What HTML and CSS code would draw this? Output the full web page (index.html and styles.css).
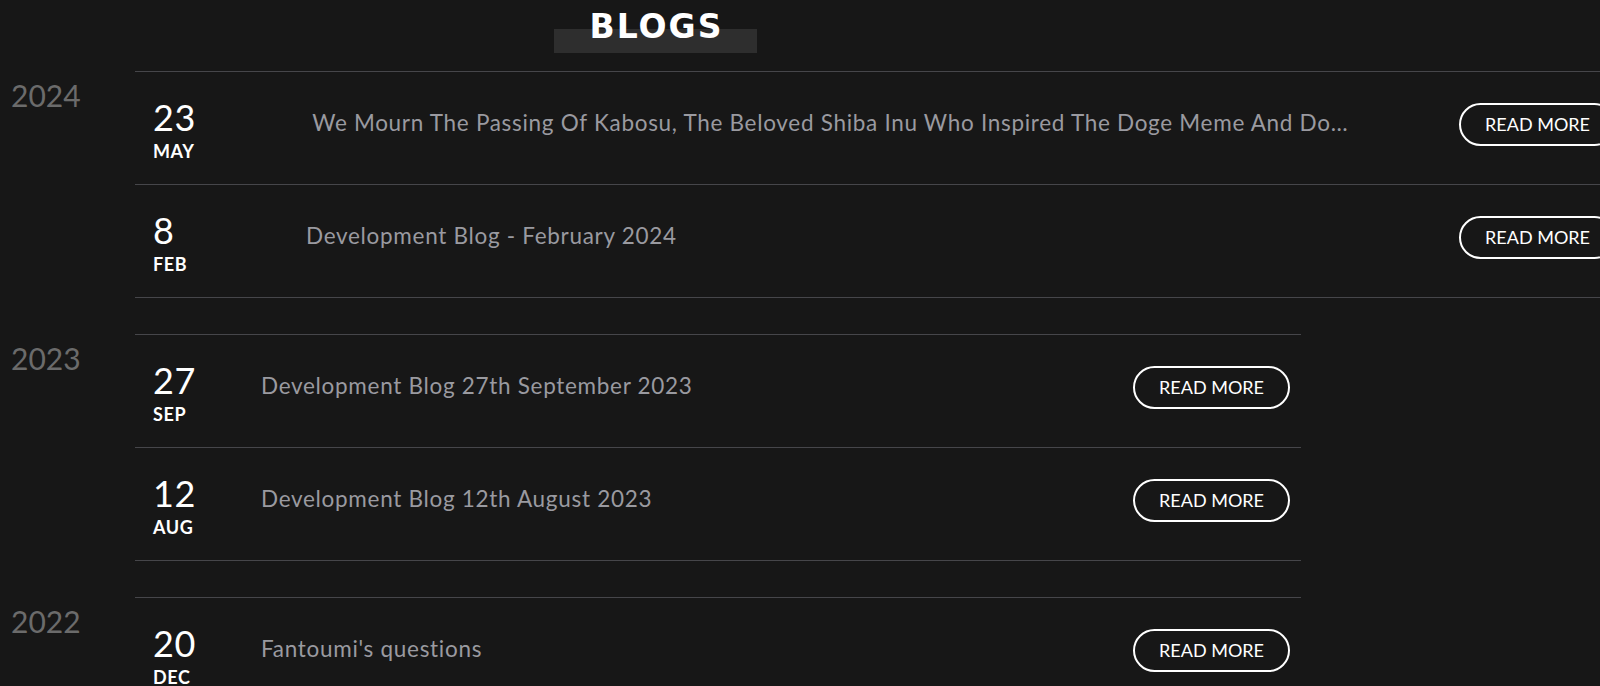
FILE: index.html
```html
<!DOCTYPE html>
<html lang="en">
<head>
<meta charset="utf-8">
<title>Blogs</title>
<link rel="stylesheet" href="styles.css">
</head>
<body>
<main class="page">
  <h1 class="page-title">BLOGS</h1>

  <section class="year-group">
    <div class="year">2024</div>
    <ul class="feed feed-wide">
      <li class="post">
        <div class="date"><span class="day">23</span><span class="month">MAY</span></div>
        <a class="post-title" href="#">&nbsp;We Mourn The Passing Of Kabosu, The Beloved Shiba Inu Who Inspired The Doge Meme And Dogecoin</a>
        <a class="read-more" href="#">READ MORE</a>
      </li>
      <li class="post">
        <div class="date"><span class="day">8</span><span class="month">FEB</span></div>
        <a class="post-title" href="#">Development Blog - February 2024</a>
        <a class="read-more" href="#">READ MORE</a>
      </li>
    </ul>
  </section>

  <section class="year-group">
    <div class="year">2023</div>
    <ul class="feed">
      <li class="post">
        <div class="date"><span class="day">27</span><span class="month">SEP</span></div>
        <a class="post-title" href="#">Development Blog 27th September 2023</a>
        <a class="read-more" href="#">READ MORE</a>
      </li>
      <li class="post">
        <div class="date"><span class="day">12</span><span class="month">AUG</span></div>
        <a class="post-title" href="#">Development Blog 12th August 2023</a>
        <a class="read-more" href="#">READ MORE</a>
      </li>
    </ul>
  </section>

  <section class="year-group">
    <div class="year">2022</div>
    <ul class="feed">
      <li class="post">
        <div class="date"><span class="day">20</span><span class="month">DEC</span></div>
        <a class="post-title" href="#">Fantoumi's questions</a>
        <a class="read-more" href="#">READ MORE</a>
      </li>
    </ul>
  </section>
</main>
</body>
</html>
```

FILE: styles.css
```css
html, body {
  margin: 0;
  padding: 0;
  background: #171717;
  overflow: hidden;
}

body {
  font-family: Lato, "Noto Sans", sans-serif;
  color: #fff;
}

.page {
  display: flex;
  flex-direction: column;
  height: 686px;
  overflow: hidden;
}

.page-title {
  margin: 0 0 18px 554px;
  width: 203px;
  height: 53px;
  font-family: "DejaVu Sans", Inter, sans-serif;
  font-weight: 700;
  font-size: 33px;
  line-height: 53px;
  letter-spacing: 2px;
  text-indent: 2px;
  text-align: center;
  color: #fff;
  background: linear-gradient(to bottom, transparent 0, transparent 29px, #2e2e2e 29px, #2e2e2e 53px);
  flex: none;
}

.year-group {
  display: flex;
  flex: none;
  margin-bottom: 36px;
}

.year {
  width: 124px;
  padding: 6px 0 0 11px;
  flex: none;
  font-size: 30px;
  line-height: 1.2;
  color: #6b6b6b;
}

.feed {
  list-style: none;
  margin: 0;
  padding: 0;
  width: 1166px;
  flex: none;
  border-top: 1px solid #46464a;
}

.feed-wide {
  width: 1492px;
}

.post {
  display: grid;
  grid-template-columns: 126px minmax(0, 1fr) auto;
  align-items: center;
  height: 112px;
  border-bottom: 1px solid #46464a;
}

.feed-wide .post {
  grid-template-columns: 171px minmax(0, 1fr) auto;
}

.date {
  display: flex;
  flex-direction: column;
  padding: 3px 0 0 18px;
}

.day {
  font-size: 36px;
  line-height: 1.2;
  letter-spacing: 0.5px;
  color: #fff;
}

.month {
  margin-top: 2px;
  font-size: 18px;
  font-weight: 700;
  line-height: 1.2;
  letter-spacing: 0.6px;
  color: #fff;
}

.post-title {
  margin: 0 103px 11px 0;
  font-size: 22.5px;
  line-height: 1.2;
  letter-spacing: 0.7px;
  color: #9a9aa0;
  text-decoration: none;
  white-space: nowrap;
  overflow: hidden;
  text-overflow: ellipsis;
}

.read-more {
  margin: 0 11px 8px 0;
  padding: 9px 24px 10px;
  border: 2px solid #fff;
  border-radius: 22px;
  font-size: 18px;
  line-height: 20px;
  color: #fff;
  text-decoration: none;
  white-space: nowrap;
}
```
